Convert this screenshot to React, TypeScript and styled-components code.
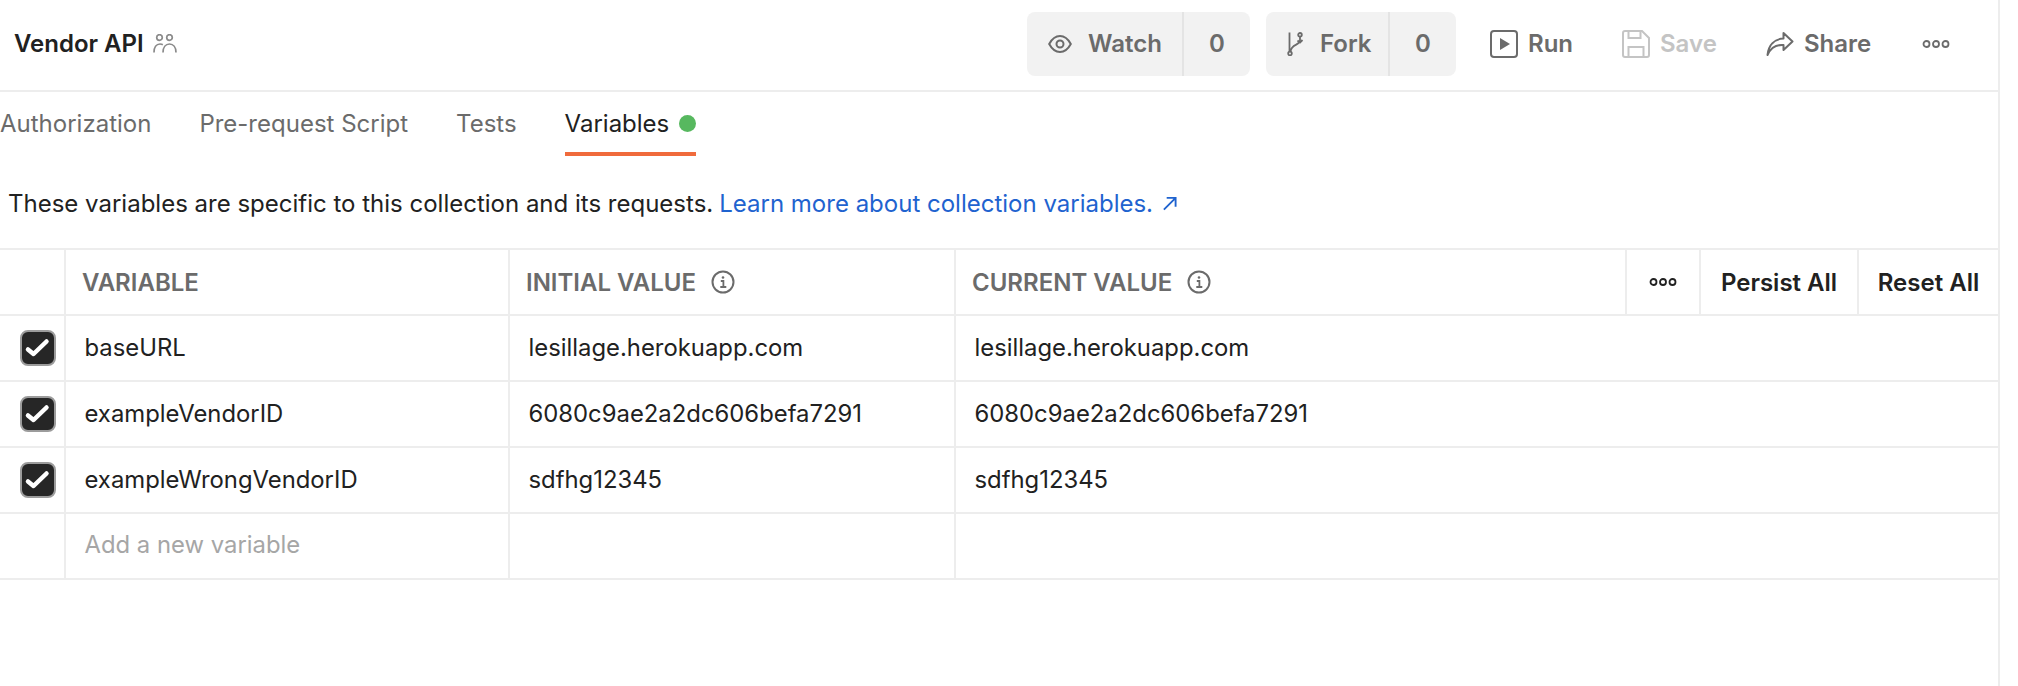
import React from "react";
import styled, { createGlobalStyle } from "styled-components";

const GlobalStyle = createGlobalStyle`
  html, body {
    margin: 0;
    background: #fff;
    overflow: hidden;
  }
  body {
    font-family: Inter, "Liberation Sans", sans-serif;
    color: #212121;
  }
`;

const Page = styled.div`
  width: 2000px;
  height: 686px;
  box-sizing: border-box;
  border-right: 2px solid #ededed;
`;

const Header = styled.div`
  height: 92px;
  box-sizing: border-box;
  border-bottom: 2px solid #ededed;
  display: flex;
  align-items: center;
  justify-content: space-between;
  padding: 0 48px 3px 14px;
`;

const TitleGroup = styled.div`
  display: flex;
  align-items: center;
  gap: 9px;
`;

const Title = styled.div`
  font-size: 24px;
  font-weight: 600;
`;

const Actions = styled.div`
  display: flex;
  align-items: center;
`;

const CountButton = styled.div<{ $width: number; $gap?: number }>`
  display: flex;
  align-items: center;
  width: ${(p) => p.$width}px;
  height: 64px;
  margin-right: ${(p) => p.$gap ?? 0}px;
  background: #f2f2f2;
  border-radius: 8px;
  color: #6b6b6b;
  font-size: 24px;
  font-weight: 600;
`;

const CountLabel = styled.div`
  flex: 1;
  height: 100%;
  display: flex;
  align-items: center;
  gap: 16px;
  padding-left: 21px;
  border-right: 2px solid #e4e4e4;
`;

const Count = styled.div`
  width: 66px;
  text-align: center;
`;

const PlainAction = styled.div<{ $muted?: boolean; $width: number }>`
  display: flex;
  align-items: center;
  gap: 10px;
  width: ${(p) => p.$width}px;
  font-size: 24px;
  font-weight: 600;
  color: ${(p) => (p.$muted ? "#c4c4c4" : "#6b6b6b")};
`;

const DotsWrap = styled.div`
  display: flex;
  color: #6b6b6b;
`;

const Tabs = styled.div`
  display: flex;
  gap: 48px;
  height: 64px;
`;

const Tab = styled.div<{ $active?: boolean }>`
  display: flex;
  align-items: center;
  gap: 10px;
  height: 64px;
  padding-top: 2px;
  box-sizing: border-box;
  font-size: 24px;
  color: ${(p) => (p.$active ? "#212121" : "#6b6b6b")};
  border-bottom: 4px solid ${(p) => (p.$active ? "#f06b3c" : "transparent")};
`;

const Dot = styled.span`
  width: 17px;
  height: 17px;
  border-radius: 50%;
  background: #57b85f;
`;

const Description = styled.div`
  height: 93px;
  box-sizing: border-box;
  display: flex;
  align-items: center;
  gap: 6px;
  padding: 2px 0 0 8px;
  font-size: 24px;
  white-space: nowrap;
`;

const LearnLink = styled.a`
  color: #1f63cf;
  display: inline-flex;
  align-items: center;
  gap: 9px;
`;

const Table = styled.div`
  border-top: 2px solid #ededed;
  margin-top: -1px;
`;

const Row = styled.div`
  display: grid;
  grid-template-columns: 66px 444px 446px 1fr;
  height: 66px;
  box-sizing: border-box;
  border-bottom: 2px solid #ededed;
`;

const Cell = styled.div`
  display: flex;
  align-items: center;
  padding: 0 0 2px 18.5px;
  font-size: 23.85px;
  border-right: 2px solid #ededed;
  white-space: nowrap;
  &:first-child {
    justify-content: center;
    padding: 0 0 0 12px;
  }
  &:last-child {
    border-right: none;
  }
`;

const Placeholder = styled.span`
  color: #a6a6a6;
  padding-bottom: 2px;
`;

const HeadCell = styled.div`
  display: flex;
  align-items: center;
  gap: 15px;
  padding-left: 16px;
  font-size: 24px;
  font-weight: 600;
  color: #6b6b6b;
  border-right: 2px solid #ededed;
`;

const HeadActions = styled.div`
  display: flex;
  align-items: center;
  justify-content: space-between;
  padding-left: 16px;
`;

const HeadLabel = styled.div`
  display: flex;
  align-items: center;
  gap: 15px;
  font-size: 24px;
  font-weight: 600;
  color: #6b6b6b;
`;

const HeadTools = styled.div`
  display: flex;
  height: 100%;
`;

const HeadTool = styled.div<{ $width: number }>`
  width: ${(p) => p.$width}px;
  display: flex;
  align-items: center;
  justify-content: center;
  box-sizing: border-box;
  border-left: 2px solid #ededed;
  font-size: 24px;
  font-weight: 600;
  color: #212121;
`;

const Checkbox = styled.span`
  width: 36px;
  height: 36px;
  box-sizing: border-box;
  display: flex;
  align-items: center;
  justify-content: center;
  background: #262626;
  border: 2px solid #9c9c9c;
  border-radius: 8px;
`;

const UsersIcon = () => (
  <svg width="24" height="19" viewBox="0 0 24 19" fill="none" stroke="#8a8a8a" strokeWidth="1.7">
    <circle cx="6.5" cy="3.5" r="2.8" />
    <circle cx="16.5" cy="3.5" r="2.8" />
    <path d="M1 18.500c0-5.500 2.300-8.500 6-8.500 1 0 2 .2 2.800.7" />
    <path d="M10 18.500c0-5.500 2.800-8.500 6.500-8.500S23 13 23 18.500" />
  </svg>
);

const EyeIcon = () => (
  <svg width="24" height="18" viewBox="0 0 24 18" fill="none" stroke="#6b6b6b" strokeWidth="2">
    <path d="M1.200 9C4 3.800 8 1 12 1s8 2.800 10.800 8C20 14.200 16 17 12 17S4 14.200 1.200 9Z" />
    <circle cx="12" cy="9" r="3.500" />
  </svg>
);

const ForkIcon = () => (
  <svg width="17" height="24" viewBox="0 0 17 24" fill="none" stroke="#6b6b6b" strokeWidth="1.800">
    <circle cx="3" cy="21.500" r="1.800" />
    <circle cx="13" cy="2.800" r="1.800" />
    <path d="M2.500 0.500v19.200M13 4.600v4c0 5-9 3-9.500 11.200" />
    <path d="M10.500 8.500 13 10.500 15.500 8" />
  </svg>
);

const RunIcon = () => (
  <svg width="28" height="28" viewBox="0 0 28 28" fill="none">
    <rect x="1" y="1" width="26" height="26" rx="3" stroke="#6b6b6b" strokeWidth="2" />
    <path d="M10 8v12l10-6z" fill="#6b6b6b" />
  </svg>
);

const SaveIcon = () => (
  <svg width="28" height="28" viewBox="0 0 28 28" fill="none" stroke="#c4c4c4" strokeWidth="2">
    <path d="M1 3a2 2 0 0 1 2-2h17l7 7v17a2 2 0 0 1-2 2H3a2 2 0 0 1-2-2z" />
    <path d="M6.500 1v7h12V1M6.500 27V17h15v10" />
  </svg>
);

const ShareIcon = () => (
  <svg width="28" height="26" viewBox="0 0 28 26" fill="none" stroke="#6b6b6b" strokeWidth="2" strokeLinejoin="round">
    <path d="M17.500 2 26.500 10.500 17.500 19v-5c-7-.5-12.500 2-16 10C2.500 14 8.500 8 17.500 7.500z" />
  </svg>
);

const DotsIcon = () => (
  <svg width="28" height="10" viewBox="0 0 28 10" fill="none" stroke="currentColor" strokeWidth="1.800">
    <circle cx="4.500" cy="5" r="3" />
    <circle cx="14" cy="5" r="3" />
    <circle cx="23.500" cy="5" r="3" />
  </svg>
);

const InfoIcon = () => (
  <svg width="24" height="24" viewBox="0 0 24 24" fill="none" stroke="#6b6b6b" strokeWidth="2">
    <circle cx="12" cy="12" r="10.500" />
    <path d="M9.800 11h2.600v5.800M9.300 17h6" strokeWidth="1.800" />
    <circle cx="12" cy="7.500" r="1.300" fill="#6b6b6b" stroke="none" />
  </svg>
);

const ArrowIcon = () => (
  <svg width="15" height="15" viewBox="0 0 16 16" fill="none" stroke="#1f63cf" strokeWidth="2">
    <path d="M2 14.500 14 2.500M5 2h9.500v9.500" />
  </svg>
);

const CheckIcon = () => (
  <svg width="28" height="24" viewBox="0 0 28 24" fill="none" stroke="#fff" strokeWidth="4.500" strokeLinecap="round" strokeLinejoin="round">
    <path d="M4 13.500 9.500 18 22.500 5.500" />
  </svg>
);

const variables = [
  { name: "baseURL", value: "lesillage.herokuapp.com" },
  { name: "exampleVendorID", value: "6080c9ae2a2dc606befa7291" },
  { name: "exampleWrongVendorID", value: "sdfhg12345" },
];

export default function App() {
  return (
    <Page>
      <GlobalStyle />
      <Header>
        <TitleGroup>
          <Title>Vendor API</Title>
          <UsersIcon />
        </TitleGroup>
        <Actions>
          <CountButton $width={223} $gap={16}>
            <CountLabel>
              <EyeIcon />
              Watch
            </CountLabel>
            <Count>0</Count>
          </CountButton>
          <CountButton $width={190} $gap={34}>
            <CountLabel>
              <ForkIcon />
              Fork
            </CountLabel>
            <Count>0</Count>
          </CountButton>
          <PlainAction $width={132}>
            <RunIcon />
            Run
          </PlainAction>
          <PlainAction $width={144} $muted>
            <SaveIcon />
            Save
          </PlainAction>
          <PlainAction $width={156}>
            <ShareIcon />
            Share
          </PlainAction>
          <DotsWrap>
            <DotsIcon />
          </DotsWrap>
        </Actions>
      </Header>
      <Tabs>
        <Tab>Authorization</Tab>
        <Tab>Pre-request Script</Tab>
        <Tab>Tests</Tab>
        <Tab $active>
          Variables
          <Dot />
        </Tab>
      </Tabs>
      <Description>
        These variables are specific to this collection and its requests.
        <LearnLink>
          Learn more about collection variables.
          <ArrowIcon />
        </LearnLink>
      </Description>
      <Table>
        <Row>
          <HeadCell />
          <HeadCell>VARIABLE</HeadCell>
          <HeadCell>
            INITIAL VALUE
            <InfoIcon />
          </HeadCell>
          <HeadActions>
            <HeadLabel>
              CURRENT VALUE
              <InfoIcon />
            </HeadLabel>
            <HeadTools>
              <HeadTool $width={74}>
                <DotsIcon />
              </HeadTool>
              <HeadTool $width={158}>Persist All</HeadTool>
              <HeadTool $width={141}>Reset All</HeadTool>
            </HeadTools>
          </HeadActions>
        </Row>
        {variables.map((v) => (
          <Row key={v.name}>
            <Cell>
              <Checkbox>
                <CheckIcon />
              </Checkbox>
            </Cell>
            <Cell>{v.name}</Cell>
            <Cell>{v.value}</Cell>
            <Cell>{v.value}</Cell>
          </Row>
        ))}
        <Row>
          <Cell />
          <Cell>
            <Placeholder>Add a new variable</Placeholder>
          </Cell>
          <Cell />
          <Cell />
        </Row>
      </Table>
    </Page>
  );
}
